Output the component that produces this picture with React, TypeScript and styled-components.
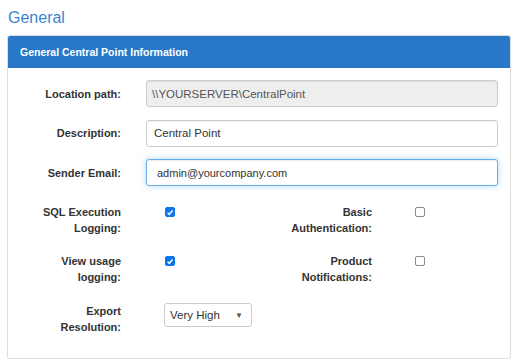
import styled, { createGlobalStyle } from "styled-components";

const GlobalStyle = createGlobalStyle`
  html, body {
    margin: 0;
    padding: 0;
    background: #fff;
    font-family: "Liberation Sans", Arial, sans-serif;
    color: #333;
  }
`;

const Check = ({ checked }: { checked?: boolean }) => (
  <CheckBox $checked={checked}>
    {checked && (
      <svg width="9" height="9" viewBox="0 0 10 10">
        <path d="M2 5.2 L4.1 7.3 L8.2 2.6" fill="none" stroke="#fff" strokeWidth="1.8" />
      </svg>
    )}
  </CheckBox>
);

const App = () => {
  return (
    <>
      <GlobalStyle />
      <Page>
        <Heading>General</Heading>
        <Panel>
          <PanelHeader>General Central Point Information</PanelHeader>
          <PanelBody>
            <FieldRow>
              <Label>Location path:</Label>
              <TextBox $disabled>\\YOURSERVER\CentralPoint</TextBox>
            </FieldRow>
            <FieldRow>
              <Label>Description:</Label>
              <TextBox>Central Point</TextBox>
            </FieldRow>
            <FieldRow>
              <Label>Sender Email:</Label>
              <TextBox $focused>admin@yourcompany.com</TextBox>
            </FieldRow>

            <CheckRow $top={18}>
              <Label>
                SQL Execution
                <br />
                Logging:
              </Label>
              <CheckCell $pad={44}>
                <Check checked />
              </CheckCell>
              <Label>
                Basic
                <br />
                Authentication:
              </Label>
              <CheckCell $pad={43}>
                <Check />
              </CheckCell>
            </CheckRow>

            <CheckRow $top={17}>
              <Label>
                View usage
                <br />
                logging:
              </Label>
              <CheckCell $pad={44}>
                <Check checked />
              </CheckCell>
              <Label>
                Product
                <br />
                Notifications:
              </Label>
              <CheckCell $pad={43}>
                <Check />
              </CheckCell>
            </CheckRow>

            <CheckRow $top={18}>
              <Label>
                Export
                <br />
                Resolution:
              </Label>
              <CheckCell $pad={43}>
                <Select>
                  <span>Very High</span>
                  <Caret>▼</Caret>
                </Select>
              </CheckCell>
            </CheckRow>
          </PanelBody>
        </Panel>
      </Page>
    </>
  );
};

export default App;

const Page = styled.div`
  padding: 0 3px 0 7px;
`;

const Heading = styled.div`
  padding: 8px 0 0 1px;
  margin-bottom: 7px;
  font-size: 16px;
  line-height: 20px;
  color: #3a84d2;
`;

const Panel = styled.div`
  border: 1px solid #dcdcdc;
  border-radius: 3px;
  box-shadow: 0 1px 1px rgba(0, 0, 0, 0.06);
  overflow: hidden;
`;

const PanelHeader = styled.div`
  height: 32px;
  display: flex;
  align-items: center;
  padding-left: 12px;
  background: #2878c9;
  color: #fff;
  font-weight: bold;
  font-size: 10.5px;
`;

const PanelBody = styled.div`
  padding: 12px 12px 23px 12px;
  display: flex;
  flex-direction: column;
`;

const FieldRow = styled.div`
  display: grid;
  grid-template-columns: 101px 1fr;
  column-gap: 25px;
  align-items: center;
  & + & {
    margin-top: 12.5px;
  }
`;

const Label = styled.div`
  text-align: right;
  font-weight: bold;
  font-size: 11px;
  line-height: 16px;
  color: #333;
`;

const TextBox = styled.div<{ $disabled?: boolean; $focused?: boolean }>`
  height: 27px;
  box-sizing: border-box;
  display: flex;
  align-items: center;
  padding: 0 ${(p) => (p.$focused ? 10 : p.$disabled ? 5 : 7)}px;
  border: 1px solid ${(p) => (p.$focused ? "#66afe9" : "#ccc")};
  border-radius: 3px;
  background: ${(p) => (p.$disabled ? "#eee" : "#fff")};
  color: ${(p) => (p.$disabled ? "#555" : "#333")};
  font-size: ${(p) => (p.$focused ? 11 : 11.5)}px;
  box-shadow: ${(p) =>
    p.$focused
      ? "inset 0 1px 1px rgba(0,0,0,.075), 0 0 6px rgba(102,175,233,.5)"
      : "inset 0 1px 1px rgba(0,0,0,.075)"};
`;

const CheckRow = styled.div<{ $top: number }>`
  display: grid;
  grid-template-columns: 101px 151px 100px 1fr;
  margin-top: ${(p) => p.$top}px;
  align-items: start;
`;

const CheckCell = styled.div<{ $pad: number }>`
  padding-left: ${(p) => p.$pad}px;
  padding-top: 3px;
`;

const CheckBox = styled.span<{ $checked?: boolean }>`
  width: 10px;
  height: 10px;
  box-sizing: border-box;
  display: flex;
  align-items: center;
  justify-content: center;
  border-radius: 2px;
  border: 1px solid ${(p) => (p.$checked ? "#0b75f0" : "#8d8d8d")};
  background: ${(p) => (p.$checked ? "#0b75f0" : "#fff")};
`;

const Select = styled.div`
  margin-top: -3px;
  width: 88px;
  height: 24px;
  box-sizing: border-box;
  display: flex;
  align-items: center;
  justify-content: space-between;
  padding: 0 8px 0 5px;
  border: 1px solid #ccc;
  border-radius: 3px;
  font-size: 11.5px;
  color: #333;
`;

const Caret = styled.span`
  font-size: 8px;
  color: #555;
`;
